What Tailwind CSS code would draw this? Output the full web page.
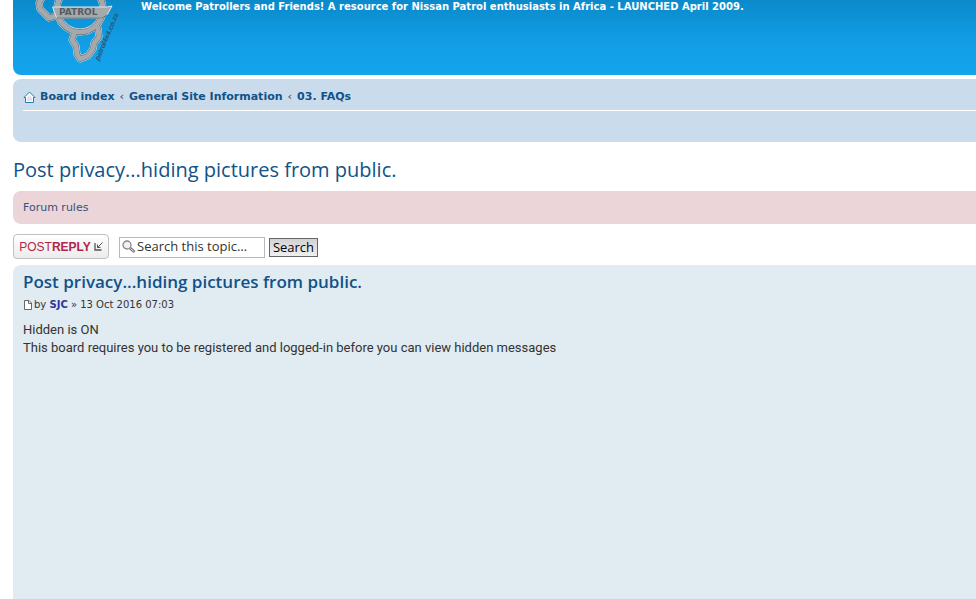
<!DOCTYPE html>
<html lang="en-gb">
<head>
  <meta charset="UTF-8" />
  <meta name="viewport" content="width=device-width, initial-scale=1.0" />
  <title>Post privacy...hiding pictures from public.</title>
  <script src="https://cdn.jsdelivr.net/npm/@tailwindcss/browser@4"></script>
</head>
<body class="bg-white font-['Verdana','DejaVu_Sans',sans-serif] text-[11px] text-[#536482]">
  <div class="pl-[13px] min-h-screen flex flex-col overflow-hidden">

    <!-- Header -->
    <header class="h-[75px] flex rounded-bl-lg bg-linear-to-b from-[#0a8acb] via-[#129fe8] via-60% to-[#13a4ec] text-white">
      <a href="#" aria-label="Board index" class="w-32 shrink-0 pl-[20px]">
        <svg width="90" height="70" viewBox="33 0 90 70" fill="none">
          <g stroke-linejoin="round" stroke-linecap="round">
            <g stroke="#dbe8f0" stroke-width="7">
              <path d="M42 -2L39 3L40 9L45 14L49 18L56 16"/>
              <circle cx="80" cy="9" r="23"/>
              <path d="M74 34L72 40L76 46L77 54L80 59L88 56L93 49L94 43L99 37L98 28"/>
            </g>
            <g stroke="#5b6469" stroke-width="6">
              <path d="M42 -2L39 3L40 9L45 14L49 18L56 16"/>
              <circle cx="80" cy="9" r="23"/>
              <path d="M74 34L72 40L76 46L77 54L80 59L88 56L93 49L94 43L99 37L98 28"/>
            </g>
            <g stroke="#a5a9ab" stroke-width="5">
              <path d="M42 -2L39 3L40 9L45 14L49 18L56 16"/>
              <circle cx="80" cy="9" r="23"/>
              <path d="M74 34L72 40L76 46L77 54L80 59L88 56L93 49L94 43L99 37L98 28"/>
            </g>
            <path d="M53 7L107 7L112 6L107 15L102 18L57 18Z" fill="#a5a9ab" stroke="#dbe8f0"/>
            <path d="M57 18L102 18L107 15" stroke="#5b6469"/>
          </g>
          <text x="59" y="15" font-size="9" font-weight="bold" font-family="DejaVu Sans, sans-serif" fill="#555c61">PATROL</text>
          <text x="0" y="0" transform="translate(99 61) rotate(-67)" font-size="7" font-weight="bold" font-style="italic" font-family="Liberation Sans, sans-serif" fill="#29556f">patrol4x4.co.za</text>
        </svg>
      </a>
      <p class="font-bold text-[10px] leading-[14px]">Welcome Patrollers and Friends! A resource for Nissan Patrol enthusiasts in Africa - LAUNCHED April 2009.</p>
    </header>

    <!-- Breadcrumbs -->
    <nav class="mt-1 h-[63px] rounded-l-lg bg-[#cadceb] pl-[10px]">
      <div class="h-8 pt-[6px] flex items-center gap-[5px] border-b border-white font-bold text-[#105289]">
        <svg class="-mr-px" width="13" height="13" viewBox="0 0 13 13">
          <path d="M6.500 1L12 6.500H10.500V11.500H2.500V6.500H1Z" fill="#fff" stroke="#1b7fb5" stroke-linejoin="round"/>
          <path d="M6.500 4L9 7V10H4V7Z" fill="#e3e3e3"/>
        </svg>
        <a href="#">Board index</a>
        <span class="text-[#536482]">‹</span>
        <a href="#">General Site Information</a>
        <span class="text-[#536482]">‹</span>
        <a href="#">03. FAQs</a>
      </div>
    </nav>

    <h2 class="mt-4 text-xl leading-6 font-['Trebuchet_MS','Open_Sans',sans-serif]"><a href="#" class="text-[#105289]">Post privacy...hiding pictures from public.</a></h2>

    <div class="mt-[9px] h-[33px] flex items-center rounded-l-lg bg-[#ebd5d8] pl-[10px] pt-[2px]">
      <a href="#" class="text-[#38507f]">Forum rules</a>
    </div>

    <!-- Topic actions -->
    <div class="mt-[10px] mb-[6px] h-[25px] flex items-center">
      <button class="h-[25px] w-24 mr-[10px] flex items-center justify-center gap-[3px] rounded border border-[#c0c0c0] bg-linear-to-b from-white to-[#ececec] font-['Liberation_Sans',sans-serif] text-xs text-[#b5254a]">
        <span>POST<b>REPLY</b></span>
        <svg width="9" height="9" viewBox="0 0 9 9" fill="none" stroke="#555">
          <path d="M1 1V8H7.500" stroke-width="1.300"/>
          <path d="M8.500 .5L3.500 5.500M3.500 2.500V5.500H6.500"/>
        </svg>
      </button>
      <form class="mt-px flex items-center gap-1 text-[13px] text-[#333]">
        <div class="relative">
          <svg class="absolute left-[3px] top-[3px]" width="14" height="14" viewBox="0 0 14 14" fill="none">
            <circle cx="5" cy="5" r="4" fill="#f2f2f2" stroke="#8a8a8a" stroke-width="1.300"/>
            <path d="M8 8L12.500 12" stroke="#777" stroke-width="3"/>
            <path d="M8.500 8.500L12 11.500" stroke="#ddd"/>
          </svg>
          <input type="text" aria-label="Search this topic" value="Search this topic…" class="block h-[21px] w-[146px] border border-[#b4bac0] bg-transparent pl-[17px] pb-[2px] font-['Open_Sans',sans-serif]" />
        </div>
        <button class="h-[19px] w-[49px] border border-[#666] bg-linear-to-b from-[#d2d2d2] to-[#efefef] font-['Open_Sans',sans-serif] leading-[17px] text-black">Search</button>
      </form>
    </div>

    <!-- Post -->
    <article class="grow rounded-tl-lg bg-[#e1ebf2] pl-[10px] pt-[6px]">
      <h3 class="text-[17px] leading-[22px] font-semibold font-['Trebuchet_MS','Open_Sans',sans-serif] text-[#105289]"><a href="#">Post privacy...hiding pictures from public.</a></h3>
      <p class="mt-[5px] flex items-center text-[10px] leading-[14px] text-[#333]">
        <svg class="mr-px" width="10" height="10" viewBox="0 0 10 10">
          <path d="M1.500 .5H6L8.500 3V9.500H1.500Z" fill="#fff" stroke="#666"/>
          <path d="M5.500 .5V3.500H8.500" fill="none" stroke="#666"/>
        </svg>
        <span>by <a href="#" class="font-bold text-[#32329b]">SJC</a> » 13 Oct 2016 07:03</span>
      </p>
      <div class="mt-[9px] text-[13px] leading-[18px] font-['Trebuchet_MS',Roboto,sans-serif] text-[#333]">
        Hidden is ON<br>
        This board requires you to be registered and logged-in before you can view hidden messages
      </div>
    </article>
  </div>
</body>
</html>
